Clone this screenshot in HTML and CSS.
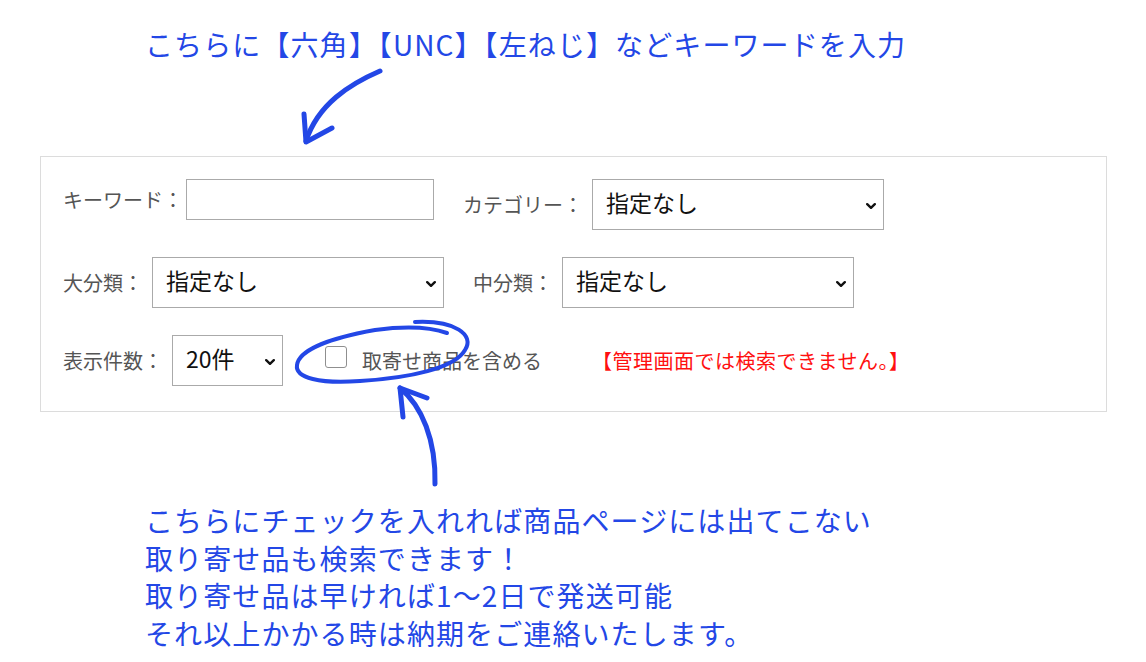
FILE: index.html
```html
<!DOCTYPE html>
<html lang="ja">
<head>
<meta charset="utf-8">
<title>検索フォーム</title>
<link rel="stylesheet" href="styles.css">
</head>
<body>
<div class="page">
  <p class="note note-top">こちらに【六角】【UNC】【左ねじ】などキーワードを入力</p>

  <form class="search">
    <div class="row">
      <div class="field">
        <label class="lbl lbl-kw">キーワード：</label>
        <input class="text" type="text">
      </div>
      <div class="field">
        <label class="lbl">カテゴリー：</label>
        <div class="sel sel-wide">
          <select><option>指定なし</option></select>
          <svg class="chev" viewBox="0 0 10 6" width="10" height="6"><path d="M1.2 1.2 L5 4.8 L8.8 1.2" fill="none" stroke="#111" stroke-width="2.4" stroke-linecap="round" stroke-linejoin="round"/></svg>
        </div>
      </div>
    </div>

    <div class="row">
      <div class="field">
        <label class="lbl">大分類：</label>
        <div class="sel sel-wide">
          <select><option>指定なし</option></select>
          <svg class="chev" viewBox="0 0 10 6" width="10" height="6"><path d="M1.2 1.2 L5 4.8 L8.8 1.2" fill="none" stroke="#111" stroke-width="2.4" stroke-linecap="round" stroke-linejoin="round"/></svg>
        </div>
      </div>
      <div class="field">
        <label class="lbl">中分類：</label>
        <div class="sel sel-wide">
          <select><option>指定なし</option></select>
          <svg class="chev" viewBox="0 0 10 6" width="10" height="6"><path d="M1.2 1.2 L5 4.8 L8.8 1.2" fill="none" stroke="#111" stroke-width="2.4" stroke-linecap="round" stroke-linejoin="round"/></svg>
        </div>
      </div>
    </div>

    <div class="row row-last">
      <div class="field">
        <label class="lbl">表示件数：</label>
        <div class="sel sel-num">
          <select><option>20件</option></select>
          <svg class="chev" viewBox="0 0 10 6" width="10" height="6"><path d="M1.2 1.2 L5 4.8 L8.8 1.2" fill="none" stroke="#111" stroke-width="2.4" stroke-linecap="round" stroke-linejoin="round"/></svg>
        </div>
      </div>
      <label class="check">
        <input type="checkbox" class="box">
        <span>取寄せ商品を含める</span>
      </label>
      <span class="warn">【管理画面では検索できません。】</span>
    </div>
  </form>

  <p class="note note-bottom">こちらにチェックを入れれば商品ページには出てこない<br>取り寄せ品も検索できます！<br>取り寄せ品は早ければ1〜2日で発送可能<br>それ以上かかる時は納期をご連絡いたします。</p>

  <svg class="marks" width="1146" height="662" viewBox="0 0 1146 662">
    <g fill="none" stroke="#2347e6" stroke-width="5" stroke-linecap="round" stroke-linejoin="round">
      <path d="M380 71 C350 84 318 104 306 141"/>
      <path d="M304 114 L306 142 L332 128"/>
      <path d="M435 484 C436 440 422 406 400 388"/>
      <path d="M403 417 L400 388 L427 398"/>
      <path stroke-width="4" d="M415 322 C455 320 475 335 465 350 C455 368 410 378 360 381 C320 384 295 378 297 365 C299 350 330 338 375 330 C405 326 430 327 447 333"/>
    </g>
  </svg>
</div>
</body>
</html>
```

FILE: styles.css
```css
* { box-sizing: border-box; }

html, body {
  margin: 0;
  padding: 0;
  background: #fff;
}

body {
  font-family: "Noto Sans CJK JP", "Noto Sans", sans-serif;
  color: #222;
}

.page {
  position: relative;
  width: 1146px;
  height: 662px;
  padding-top: 25px;
  overflow: hidden;
}

.note {
  margin: 0;
  color: #2347e6;
  font-size: 28px;
  font-weight: 400;
  letter-spacing: 1.1px;
  line-height: 38px;
  padding-left: 145px;
  white-space: nowrap;
}

.note-bottom {
  margin-top: 90px;
  line-height: 37.7px;
}

.search {
  margin: 93px 0 0 40px;
  width: 1067px;
  height: 256px;
  border: 1px solid #dcdcdc;
  padding: 22px 0 0 22px;
  display: flex;
  flex-direction: column;
  gap: 27px;
}

.row {
  display: flex;
  align-items: flex-start;
  gap: 29px;
}

.row-last {
  align-items: center;
  gap: 0;
}

.field {
  display: flex;
  align-items: center;
  gap: 9px;
}

.lbl {
  font-size: 20px;
  color: #555;
  white-space: nowrap;
}

.lbl-kw { margin-right: -6px; }

.text {
  width: 248px;
  height: 41px;
  border: 1px solid #aaa;
  border-radius: 0;
  background: #fff;
  margin: 0;
}

.sel {
  position: relative;
  height: 51px;
}

.sel select {
  appearance: none;
  -webkit-appearance: none;
  width: 100%;
  height: 100%;
  margin: 0;
  border: 1px solid #aaa;
  border-radius: 0;
  background: #fff;
  font-family: "Noto Sans CJK JP", "Noto Sans", sans-serif;
  font-size: 23px;
  color: #111;
  padding: 0 0 6px 13px;
}

.sel-wide { width: 292px; }
.sel-num { width: 111px; }

.chev {
  position: absolute;
  right: 8px;
  top: 50%;
  margin-top: -2px;
}

.check {
  display: flex;
  align-items: center;
  gap: 15px;
  margin-left: 42px;
  font-size: 20px;
  color: #555;
}

.box {
  appearance: none;
  -webkit-appearance: none;
  width: 22px;
  height: 22px;
  margin: 0 0 7px 0;
  border: 1.5px solid #8f8f8f;
  border-radius: 3px;
  background: #fff;
}

.warn {
  margin-left: 50px;
  font-size: 20px;
  letter-spacing: 0.5px;
  color: #ff1010;
  white-space: nowrap;
}

.marks {
  position: absolute;
  left: 0;
  top: 0;
  pointer-events: none;
}
```
